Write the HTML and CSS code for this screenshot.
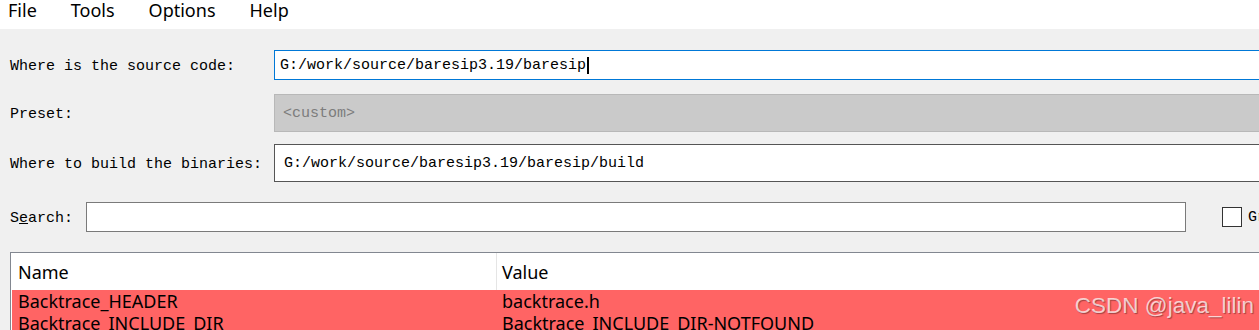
FILE: index.html
```html
<!DOCTYPE html>
<html lang="en">
<head>
  <meta charset="UTF-8" />
  <title>CMake</title>
  <link rel="stylesheet" href="styles.css">
</head>
<body>

<!-- Menu Bar -->
<div class="menubar">
  <span class="menu-item">File</span>
  <span class="menu-item">Tools</span>
  <span class="menu-item">Options</span>
  <span class="menu-item">Help</span>
</div>

<!-- Paths -->
<div class="form">
  <div class="row row-source">
    <label>Where is the source code:</label>
    <div class="field field-focus">G:/work/source/baresip3.19/baresip<span class="caret"></span></div>
  </div>
  <div class="row row-preset">
    <label>Preset:</label>
    <div class="field field-disabled">&lt;custom&gt;</div>
  </div>
  <div class="row row-build">
    <label>Where to build the binaries:</label>
    <div class="field field-build">G:/work/source/baresip3.19/baresip/build</div>
  </div>
</div>

<!-- Search -->
<div class="search-row">
  <label>S<u>e</u>arch:</label>
  <div class="search-box"></div>
  <div class="check"><span class="box"></span><span class="check-label">Grouped</span></div>
</div>

<!-- Cache Table -->
<div class="table">
  <div class="thead">
    <div class="col-name">Name</div>
    <div class="col-value">Value</div>
  </div>
  <div class="tr new">
    <div class="col-name">Backtrace_HEADER</div>
    <div class="col-value">backtrace.h</div>
  </div>
  <div class="tr new">
    <div class="col-name">Backtrace_INCLUDE_DIR</div>
    <div class="col-value">Backtrace_INCLUDE_DIR-NOTFOUND</div>
  </div>
</div>

<div class="watermark">CSDN @java_lilin</div>

</body>
</html>
```
FILE: styles.css
```css
* { margin: 0; padding: 0; box-sizing: border-box; }
body {
  background: #f0f0f0;
  font-family: "Liberation Mono", monospace;
  font-size: 15px;
  color: #000;
  overflow: hidden;
  position: relative;
  height: 330px;
}
.menubar {
  height: 29px;
  background: #fff;
  display: flex;
  align-items: flex-start;
  padding-left: 8px;
  gap: 34px;
  font-family: "Noto Sans", sans-serif;
  font-size: 18px;
}
.menu-item { line-height: 20px; }
.form {
  padding-top: 21px;
  display: flex; flex-direction: column;
}
.row {
  display: grid;
  grid-template-columns: 264px 1fr;
  padding-left: 10px;
  margin-right: -3px;
  align-items: center;
}
.row label { padding-top: 2px; }
.row-preset { margin-top: 14px; }
.row-build { margin-top: 12px; }
.field {
  background: #fff;
  display: flex; align-items: center;
  white-space: pre;
}
.field-focus {
  height: 30px;
  border: 1px solid #0078d7;
  padding-left: 5px;
}
.caret {
  display: inline-block;
  width: 2px; height: 17px;
  background: #000;
  margin-left: 1px;
}
.field-disabled {
  height: 38px;
  background: #cacaca;
  border: 1px solid #b8b8b8;
  color: #7c7c7c;
  padding-left: 8px;
}
.field-build {
  height: 38px;
  border: 1px solid #555;
  padding-left: 9px;
}
.search-row {
  margin-top: 20px;
  height: 30px;
  display: flex; align-items: center;
  padding-left: 10px;
  white-space: nowrap;
}
.search-row label { padding-top: 2px; }
.search-row u { text-decoration-thickness: 1px; }
.search-box {
  flex-shrink: 0;
  margin-left: 13px;
  width: 1100px; height: 30px;
  background: #fff;
  border: 1px solid #7a7a7a;
}
.check { display: flex; align-items: center; margin-left: 36px; flex-shrink: 0; }
.box {
  width: 20px; height: 20px;
  background: #fff;
  border: 1px solid #333;
}
.check-label { margin-left: 6px; }
.table {
  margin-top: 20px;
  margin-left: 10px;
  margin-right: -4px;
  border-top: 1px solid #828790;
  border-left: 1px solid #828790;
  background: #fff;
  padding-left: 1px;
  font-family: "Noto Sans", sans-serif;
  font-size: 18px;
}
.thead {
  height: 37px;
  display: flex; align-items: center;
  background: #fff;
}
.thead .col-value { border-left: 1px solid #e5e5e5; height: 37px; display: flex; align-items: center; }
.col-name { width: 484px; padding-left: 6px; flex-shrink: 0; }
.col-value { padding-left: 5px; }
.tr {
  display: flex; align-items: center;
  height: 22px;
  line-height: 22px;
}
.tr .col-value { padding-left: 6px; }
.new { background: #ff6464; }
.watermark {
  position: absolute;
  right: 5px; top: 295px;
  font-family: "Liberation Sans", Arial, sans-serif;
  font-size: 22.5px;
  line-height: 1;
  color: rgba(255, 255, 255, 0.72);
  text-shadow: 1px 1px 1px rgba(0, 0, 0, 0.35);
}
```
